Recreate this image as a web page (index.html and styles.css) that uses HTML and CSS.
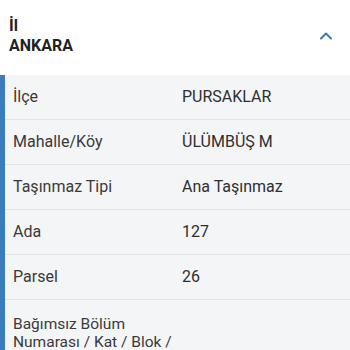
FILE: index.html
```html
<!DOCTYPE html>
<html lang="tr">
<head>
<meta charset="utf-8">
<link rel="stylesheet" href="styles.css">
</head>
<body>
<div class="header">
  <div class="title">
    <div>İl</div>
    <div>ANKARA</div>
  </div>
  <svg class="chev" width="14" height="10" viewBox="0 0 14 10"><path d="M2 7.5 L7 2.5 L12 7.5" fill="none" stroke="#3f79b4" stroke-width="2" stroke-linecap="round" stroke-linejoin="round"/></svg>
</div>
<div class="panel">
  <div class="row"><div class="label">İlçe</div><div class="value">PURSAKLAR</div></div>
  <div class="row"><div class="label">Mahalle/Köy</div><div class="value">ÜLÜMBÜŞ M</div></div>
  <div class="row"><div class="label">Taşınmaz Tipi</div><div class="value">Ana Taşınmaz</div></div>
  <div class="row"><div class="label">Ada</div><div class="value">127</div></div>
  <div class="row"><div class="label">Parsel</div><div class="value">26</div></div>
  <div class="row last"><div class="label">Bağımsız Bölüm Numarası / Kat / Blok / Giriş</div><div class="value"></div></div>
</div>
</body>
</html>
```
FILE: styles.css
```css
html, body {
  margin: 0;
  padding: 0;
  background: #ffffff;
  font-family: Roboto, "Noto Sans", sans-serif;
  color: #333333;
}
.header {
  display: flex;
  align-items: center;
  justify-content: space-between;
  padding: 16px 17px 19px 9px;
}
.title {
  font-weight: bold;
  font-size: 16px;
  line-height: 20px;
  color: #222222;
}
.chev {
  display: block;
  margin-top: -1px;
}
.panel {
  background: #f4f5f7;
  border-left: 5px solid #3a7cbd;
  min-height: 300px;
}
.row {
  display: flex;
  gap: 1px;
  padding: 12px 0 12px 8px;
  border-bottom: 1px solid #e3e5e8;
  font-size: 16px;
  line-height: 20px;
}
.row.last {
  border-bottom: none;
  font-size: 15.5px;
  line-height: 18px;
  padding-top: 15px;
}
.label {
  width: 168px;
  flex: none;
  color: #3a3a3a;
}
.value {
  color: #2f2f2f;
}
```
